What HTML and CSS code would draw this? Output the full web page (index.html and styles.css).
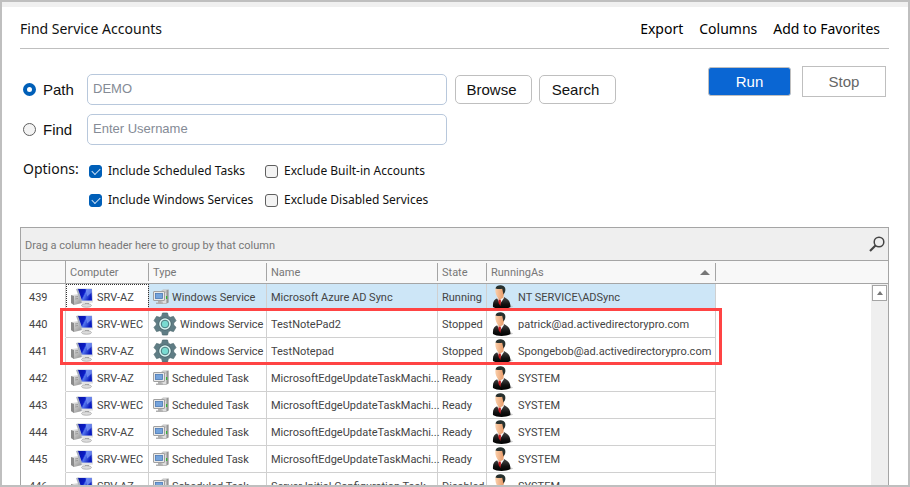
FILE: index.html
```html
<!DOCTYPE html>
<html lang="en">
<head>
    <meta charset="UTF-8">
    <meta name="viewport" content="width=device-width, initial-scale=1.0">
    <title>Find Service Accounts</title>
    <link rel="stylesheet" href="styles.css">
</head>
<body>
    <!-- Shared icons -->
    <svg class="icon-defs" aria-hidden="true">
        <defs>
            <linearGradient id="screen" x1="0" y1="0" x2="1" y2="0.4">
                <stop offset="0" stop-color="#0a14a0"/>
                <stop offset="0.5" stop-color="#0a1cc8"/>
                <stop offset="0.6" stop-color="#5577ee"/>
                <stop offset="1" stop-color="#0a1cc0"/>
            </linearGradient>
            <linearGradient id="metal" x1="0" y1="0" x2="1" y2="1">
                <stop offset="0" stop-color="#f2f2f2"/>
                <stop offset="1" stop-color="#8c8c8c"/>
            </linearGradient>
            <linearGradient id="suit" x1="0" y1="0" x2="0" y2="1">
                <stop offset="0" stop-color="#4a4a4a"/>
                <stop offset="0.6" stop-color="#111"/>
                <stop offset="1" stop-color="#000"/>
            </linearGradient>
            <linearGradient id="skin" x1="0" y1="0" x2="1" y2="0">
                <stop offset="0" stop-color="#fbd0ac"/>
                <stop offset="1" stop-color="#e59562"/>
            </linearGradient>
        </defs>
        <symbol id="icon-computer" viewBox="0 0 24 22">
            <path d="M1 9l8-1 3 9-8 2-3-2z" fill="url(#metal)"/>
            <path d="M1 9l3 1v9l-3-2z" fill="#8a8a8a"/>
            <path d="M5 11l3-.5M5 13l3-.5" stroke="#888" stroke-width="0.7"/>
            <path d="M6 3l3-.5 4 14-2 .5z" fill="#aab0bd"/>
            <path d="M7.500 2.500L22 2.500l1 13.500-10.500 0z" fill="#c4cbe0"/>
            <path d="M8 3h13.500l.5 11.500H12z" fill="url(#screen)"/>
            <path d="M15.500 3h6l.2 3.500-4.500 4z" fill="#7d9af5" opacity="0.7"/>
            <path d="M11.500 15h11.500v1.500l-11 1z" fill="#e2e2e2"/>
            <path d="M15 17h4v2h-4z" fill="#a5a5a5"/>
            <ellipse cx="16.500" cy="19.500" rx="5" ry="1.800" fill="#dcdcdc" stroke="#9a9a9a" stroke-width="0.6"/>
        </symbol>
        <symbol id="icon-pc" viewBox="0 0 16 16">
            <path d="M7 3l3-2.500h5.500v13L13 15H8z" fill="#bdbdbd"/>
            <path d="M9.500 1.500h4V14h-4z" fill="#dedede"/>
            <path d="M13.500 1.500l2-1v13l-2 1z" fill="#969696"/>
            <path d="M10 3h3" stroke="#999" stroke-width="0.7"/>
            <rect x="13" y="7" width="1.200" height="3" fill="#35b335"/>
            <rect x="0.500" y="2.500" width="11" height="9" rx="0.5" fill="#e8e8e8" stroke="#a0a0a0"/>
            <rect x="2.500" y="4.500" width="7" height="5" fill="#74a3dc" stroke="#4a78b4" stroke-width="0.8"/>
            <path d="M5 12h3v1.500h2V15H3v-1.500h2z" fill="#b0b0b0"/>
        </symbol>
        <symbol id="icon-gear" viewBox="0 0 24 24">
            <path d="M9.500 1h5l.8 3.200 2 1.100 3.200-.9 2.500 4.300-2.300 2.300v2l2.300 2.300-2.500 4.300-3.200-.9-2 1.100-.8 3.200h-5l-.8-3.200-2-1.100-3.200.9L1 15.300 3.300 13v-2L1 8.700l2.500-4.300 3.200.9 2-1.100z" fill="#5f7d85" stroke="#4d686f" stroke-width="0.7"/>
            <circle cx="12" cy="12" r="6.500" fill="#455f66"/>
            <circle cx="12" cy="12" r="5.800" fill="#d9f5f2"/>
            <circle cx="12" cy="12" r="3.800" fill="#79dbd1" stroke="#4a7c80"/>
        </symbol>
        <symbol id="icon-user" viewBox="0 0 22 24">
            <ellipse cx="14" cy="21.500" rx="7" ry="1.500" fill="#bbb" opacity="0.7"/>
            <path d="M1 22c-.5-5 1-8 5-9l3 2 3-3c4 2 6.500 4 6.500 10-4 2.500-14 2.500-17.500 0z" fill="url(#suit)"/>
            <path d="M5 13l1.500-1 5-1 .5 2-4 6z" fill="#f5f5f5"/>
            <path d="M6.500 14.500l1.500-.5 1 1.500-.5 5.500-2-3z" fill="#c4161c"/>
            <path d="M5 9h6.500v3.500L7.500 15 6 13z" fill="#eba77a"/>
            <path d="M3.500 3.500c2-2 7-2 8.500.5 1 3 0 6.500-2.500 8.500-1.500 1-3.500.5-4.500-1C3.500 9 3 6 3.500 3.500z" fill="url(#skin)"/>
            <path d="M3.500 3.500C4 1 7-.2 10 .6c3 .7 4 3 3 6.400l-1.500 2.500-.7-3-.6-2.700c-2 .4-4.700.3-6.700-.3z" fill="#27312f"/>
        </symbol>
    </svg>

    <div class="window">
        <header class="page-header">
            <h1>Find Service Accounts</h1>
            <nav>
                <a href="#">Export</a>
                <a href="#">Columns</a>
                <a href="#">Add to Favorites</a>
            </nav>
        </header>

        <!-- Search form -->
        <form class="search-form">
            <div class="fields">
                <div class="field-row">
                    <input type="radio" id="mode-path" name="mode" checked>
                    <label class="mode-label" for="mode-path">Path</label>
                    <input type="text" class="text-box" placeholder="DEMO" aria-label="Path">
                    <button type="button" class="btn">Browse</button>
                    <button type="button" class="btn">Search</button>
                </div>
                <div class="field-row">
                    <input type="radio" id="mode-find" name="mode">
                    <label class="mode-label" for="mode-find">Find</label>
                    <input type="text" class="text-box" placeholder="Enter Username" aria-label="Username">
                </div>
            </div>
            <div class="actions">
                <button type="button" class="btn btn-run">Run</button>
                <button type="button" class="btn btn-stop">Stop</button>
            </div>
        </form>

        <div class="options">
            <span class="options-title">Options:</span>
            <div class="options-list">
                <label><input type="checkbox" checked>Include Scheduled Tasks</label>
                <label><input type="checkbox">Exclude Built-in Accounts</label>
                <label><input type="checkbox" checked>Include Windows Services</label>
                <label><input type="checkbox">Exclude Disabled Services</label>
            </div>
        </div>

        <!-- Results grid -->
        <section class="grid">
            <div class="group-panel">
                <span>Drag a column header here to group by that column</span>
                <button type="button" class="find-btn" aria-label="Search results">
                    <svg width="16" height="16" viewBox="0 0 16 16">
                        <circle cx="10" cy="6" r="4.800" fill="none" stroke="#444" stroke-width="1.500"/>
                        <path d="M6.500 9.500L1 15" stroke="#444" stroke-width="2.200"/>
                    </svg>
                </button>
            </div>
            <div class="grid-body">
                <table>
                    <colgroup>
                        <col class="col-number">
                        <col class="col-computer">
                        <col class="col-type">
                        <col class="col-name">
                        <col class="col-state">
                        <col class="col-user">
                        <col>
                    </colgroup>
                    <thead>
                        <tr>
                            <th></th>
                            <th>Computer</th>
                            <th>Type</th>
                            <th>Name</th>
                            <th>State</th>
                            <th class="sorted">RunningAs</th>
                            <th></th>
                        </tr>
                    </thead>
                    <tbody>
                        <tr class="selected">
                            <td>439</td>
                            <td class="focused"><div class="cell"><svg class="computer"><use href="#icon-computer"/></svg>SRV-AZ</div></td>
                            <td><div class="cell"><svg class="pc"><use href="#icon-pc"/></svg>Windows Service</div></td>
                            <td>Microsoft Azure AD Sync</td>
                            <td>Running</td>
                            <td><div class="cell"><svg class="user"><use href="#icon-user"/></svg>NT SERVICE\ADSync</div></td>
                            <td></td>
                        </tr>
                        <tr>
                            <td>440</td>
                            <td><div class="cell"><svg class="computer"><use href="#icon-computer"/></svg>SRV-WEC</div></td>
                            <td><div class="cell"><svg class="gear"><use href="#icon-gear"/></svg>Windows Service</div></td>
                            <td>TestNotePad2</td>
                            <td>Stopped</td>
                            <td><div class="cell"><svg class="user"><use href="#icon-user"/></svg>patrick@ad.activedirectorypro.com</div></td>
                            <td></td>
                        </tr>
                        <tr>
                            <td>441</td>
                            <td><div class="cell"><svg class="computer"><use href="#icon-computer"/></svg>SRV-AZ</div></td>
                            <td><div class="cell"><svg class="gear"><use href="#icon-gear"/></svg>Windows Service</div></td>
                            <td>TestNotepad</td>
                            <td>Stopped</td>
                            <td><div class="cell"><svg class="user"><use href="#icon-user"/></svg>Spongebob@ad.activedirectorypro.com</div></td>
                            <td></td>
                        </tr>
                        <tr>
                            <td>442</td>
                            <td><div class="cell"><svg class="computer"><use href="#icon-computer"/></svg>SRV-AZ</div></td>
                            <td><div class="cell"><svg class="pc"><use href="#icon-pc"/></svg>Scheduled Task</div></td>
                            <td>MicrosoftEdgeUpdateTaskMachi...</td>
                            <td>Ready</td>
                            <td><div class="cell"><svg class="user"><use href="#icon-user"/></svg>SYSTEM</div></td>
                            <td></td>
                        </tr>
                        <tr>
                            <td>443</td>
                            <td><div class="cell"><svg class="computer"><use href="#icon-computer"/></svg>SRV-WEC</div></td>
                            <td><div class="cell"><svg class="pc"><use href="#icon-pc"/></svg>Scheduled Task</div></td>
                            <td>MicrosoftEdgeUpdateTaskMachi...</td>
                            <td>Ready</td>
                            <td><div class="cell"><svg class="user"><use href="#icon-user"/></svg>SYSTEM</div></td>
                            <td></td>
                        </tr>
                        <tr>
                            <td>444</td>
                            <td><div class="cell"><svg class="computer"><use href="#icon-computer"/></svg>SRV-AZ</div></td>
                            <td><div class="cell"><svg class="pc"><use href="#icon-pc"/></svg>Scheduled Task</div></td>
                            <td>MicrosoftEdgeUpdateTaskMachi...</td>
                            <td>Ready</td>
                            <td><div class="cell"><svg class="user"><use href="#icon-user"/></svg>SYSTEM</div></td>
                            <td></td>
                        </tr>
                        <tr>
                            <td>445</td>
                            <td><div class="cell"><svg class="computer"><use href="#icon-computer"/></svg>SRV-WEC</div></td>
                            <td><div class="cell"><svg class="pc"><use href="#icon-pc"/></svg>Scheduled Task</div></td>
                            <td>MicrosoftEdgeUpdateTaskMachi...</td>
                            <td>Ready</td>
                            <td><div class="cell"><svg class="user"><use href="#icon-user"/></svg>SYSTEM</div></td>
                            <td></td>
                        </tr>
                        <tr>
                            <td>446</td>
                            <td><div class="cell"><svg class="computer"><use href="#icon-computer"/></svg>SRV-AZ</div></td>
                            <td><div class="cell"><svg class="pc"><use href="#icon-pc"/></svg>Scheduled Task</div></td>
                            <td>Server Initial Configuration Task</td>
                            <td>Disabled</td>
                            <td><div class="cell"><svg class="user"><use href="#icon-user"/></svg>SYSTEM</div></td>
                            <td></td>
                        </tr>
                    </tbody>
                </table>
                <div class="scrollbar">
                    <button type="button" aria-label="Scroll up"></button>
                </div>
                <div class="highlight"></div>
            </div>
        </section>
    </div>
</body>
</html>
```

FILE: styles.css
```css
* {
    box-sizing: border-box;
}
body {
    margin: 0;
    font-family: "Noto Sans", Tahoma, sans-serif;
    font-size: 11px;
    color: #111;
    background-color: #fff;
}
.icon-defs {
    position: absolute;
    width: 0;
    height: 0;
}
.window {
    display: flex;
    flex-direction: column;
    height: 100vh;
    overflow: hidden;
    border: 2px solid #bfbfbf;
    padding: 0 19px 0 18px;
    background: linear-gradient(#f0f0f0 5px, #fff 5px);
}

/* Header */
.page-header {
    display: flex;
    justify-content: space-between;
    align-items: center;
    height: 47px;
    padding: 6px 9px 0 0;
    border-bottom: 1px solid #bfbfbf;
    flex-shrink: 0;
}
.page-header h1 {
    margin: 0;
    font-size: 14px;
    font-weight: normal;
}
.page-header nav {
    display: flex;
    gap: 16px;
    font-size: 14px;
}
.page-header a {
    color: #000;
    text-decoration: none;
}

/* Search form */
.search-form {
    display: flex;
    justify-content: space-between;
    align-items: flex-start;
    padding: 17px 3px 0 3px;
    font-family: "Liberation Sans", Arial, sans-serif;
    font-size: 15px;
}
.fields {
    display: flex;
    flex-direction: column;
    gap: 9px;
    padding-top: 8px;
}
.field-row {
    display: flex;
    align-items: center;
}
.mode-label {
    width: 44px;
    margin-left: 7px;
}
.text-box {
    width: 360px;
    height: 31px;
    padding: 0 5px 2px;
    border: 1px solid #b8c8dc;
    border-radius: 5px;
    background: #fff;
    font-family: inherit;
    font-size: 13px;
}
.text-box::placeholder {
    color: #858b96;
}
.btn {
    width: 77px;
    height: 29px;
    margin-left: 7px;
    padding: 0 4px 0 0;
    border: 1px solid #bfbfbf;
    border-radius: 5px;
    background: #fff;
    color: #111;
    font-family: inherit;
    font-size: 15px;
}
.text-box + .btn {
    margin-left: 8px;
}
.actions {
    display: flex;
    align-items: center;
    gap: 11px;
}
.actions .btn {
    width: 84px;
    margin: 0;
    padding: 0;
}
.actions .btn-run {
    width: 83px;
    border-radius: 3px;
    background: #0a66d3;
    color: #fff;
}
.actions .btn-stop {
    height: 31px;
    border-radius: 0;
    color: #666;
}

/* Radios and tick boxes */
input[type="radio"],
input[type="checkbox"] {
    appearance: none;
    width: 13px;
    height: 13px;
    margin: 0;
    border: 1px solid #5f5f5f;
    border-radius: 3px;
    background: #f3f3f3;
    flex-shrink: 0;
}
input[type="radio"] {
    border-radius: 50%;
}
input[type="radio"]:checked {
    border: 4px solid #005fb8;
    background: #fff;
}
input[type="checkbox"]:checked {
    display: grid;
    place-items: center;
    border-color: #005fb8;
    background: #005fb8;
}
input[type="checkbox"]:checked::after {
    content: "";
    width: 7px;
    height: 4px;
    margin-bottom: 2px;
    border: solid #cfe2f5;
    border-width: 0 0 1px 1px;
    transform: rotate(-45deg);
}
.options {
    display: flex;
    gap: 12px;
    padding: 14px 3px 17px;
}
.options-title {
    width: 54px;
    font-size: 14px;
    line-height: 20px;
}
.options-list {
    display: grid;
    grid-template-columns: 176px auto;
    row-gap: 9px;
    padding-top: 2px;
    font-size: 12px;
    line-height: 20px;
}
.options-list label {
    display: flex;
    align-items: center;
    gap: 6px;
}

/* Results grid */
.grid {
    display: flex;
    flex-direction: column;
    flex: 1;
    min-height: 0;
    border: 1px solid #a5a5a5;
    border-bottom: 0;
    color: #444;
    font-family: Roboto, Tahoma, sans-serif;
}
.group-panel {
    display: flex;
    justify-content: space-between;
    align-items: center;
    height: 33px;
    padding: 2px 3px 0 4px;
    border-bottom: 1px solid #a5a5a5;
    background: #efefef;
    color: #777;
    flex-shrink: 0;
}
.find-btn {
    height: 20px;
    padding: 0;
    border: 0;
    background: none;
}
.grid-body {
    position: relative;
    flex: 1;
    min-height: 0;
}
table {
    width: 100%;
    table-layout: fixed;
    border-collapse: separate;
    border-spacing: 0;
}
.col-number { width: 45px; }
.col-computer { width: 83px; }
.col-type { width: 118px; }
.col-name { width: 171px; }
.col-state { width: 49px; }
.col-user { width: 229px; }
th {
    height: 23px;
    padding: 0 4px;
    border-bottom: 1px solid #a5a5a5;
    background: linear-gradient(#a5a5a5, #a5a5a5) right center / 1px 18px no-repeat #f8f8f8;
    color: #777;
    font-weight: normal;
    text-align: left;
}
th:first-child {
    background-size: 1px 100%;
}
th:last-child {
    background: #f8f8f8;
}
.sorted::after {
    content: "";
    float: right;
    margin: 4px 2px 0 0;
    border: 5px solid transparent;
    border-top: 0;
    border-bottom-color: #777;
}
td {
    height: 27px;
    padding: 0 0 0 4px;
    border-right: 1px solid #d0d0d0;
    border-bottom: 1px solid #d0d0d0;
    white-space: nowrap;
}
td:first-child {
    padding-left: 8px;
    border-bottom-color: transparent;
}
td:last-child {
    border: 0;
}
.selected td {
    background: #cde6f7;
}
.selected td:first-child,
.selected td:last-child,
.selected .focused {
    background: #fff;
}
.focused {
    outline: 1px dotted #333;
    outline-offset: -1px;
}
.cell {
    display: flex;
    align-items: center;
    gap: 3px;
    height: 26px;
}
.computer {
    width: 24px;
    height: 22px;
}
.pc {
    width: 16px;
    height: 16px;
}
.gear {
    width: 24px;
    height: 24px;
}
.user {
    width: 22px;
    height: 24px;
    margin: 0 1px;
}
.cell svg {
    flex-shrink: 0;
}

.scrollbar {
    position: absolute;
    top: 23px;
    right: 0;
    bottom: 0;
    width: 17px;
    padding: 1px;
    background: #efefef;
}
.scrollbar button {
    display: grid;
    place-items: center;
    width: 15px;
    height: 16px;
    padding: 0;
    border: 1px solid #a5a5a5;
    background: #fff;
}
.scrollbar button::after {
    content: "";
    border: 3px solid transparent;
    border-top: 0;
    border-bottom: 4px solid #777;
}

/* Red frame around the service rows */
.highlight {
    position: absolute;
    top: 47px;
    left: 39px;
    width: 662px;
    height: 57px;
    border: 3px solid #f44;
}
```
